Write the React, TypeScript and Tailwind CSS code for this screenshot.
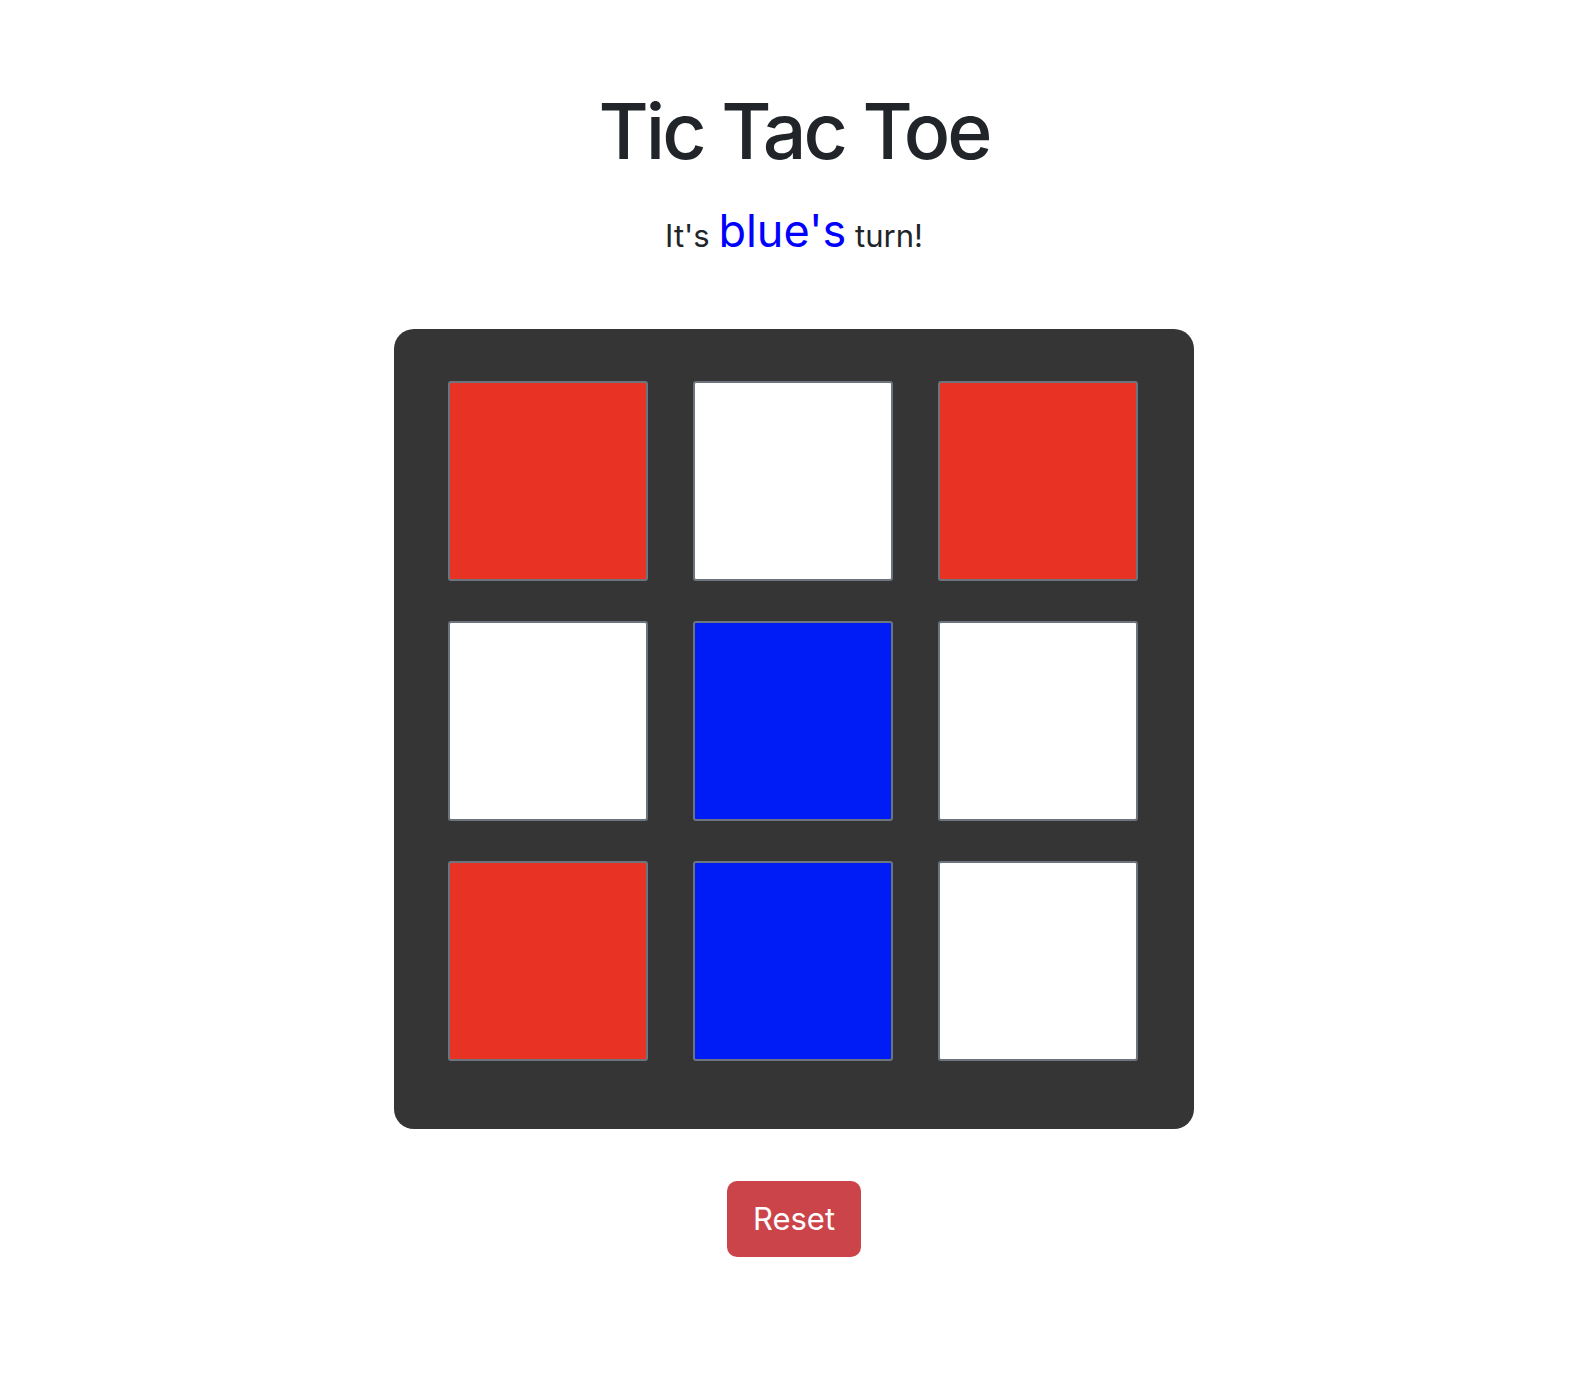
const board = ['red', 'empty', 'red', 'empty', 'blue', 'empty', 'red', 'blue', 'empty'];

function Cell({ value }: { value: string }) {
  const color =
    value === 'red' ? 'bg-[#e83223]' : value === 'blue' ? 'bg-[#001cf6]' : 'bg-white';
  return <div className={`w-[200px] h-[200px] border-2 border-[#6c757d] rounded-[3px] ${color}`} />;
}

export default function App() {
  return (
    <div
      className="min-h-screen bg-white flex flex-col items-center pl-[10px] pt-[85px] text-[#212529]"
      style={{ fontFamily: 'Inter, "Noto Sans", sans-serif' }}
    >
      <h1 className="text-[77px] leading-[92px] font-medium tracking-[-3px] m-0">Tic Tac Toe</h1>
      <p className="mt-[27px] text-[31px] leading-[54px]">
        It's <span className="text-[45px] text-[#0000ff]">blue's</span> turn!
      </p>
      <div className="mt-[66px] w-[800px] h-[800px] bg-[#353535] rounded-[20px] pl-[54px] pt-[52px]">
        <div className="grid grid-cols-[200px_200px_200px] gap-x-[45px] gap-y-[40px]">
          {board.map((v, i) => (
            <Cell key={i} value={v} />
          ))}
        </div>
      </div>
      <button className="mt-[52px] w-[134px] h-[76px] bg-[#cb444a] text-white text-[31px] rounded-[10px]">
        Reset
      </button>
    </div>
  );
}
